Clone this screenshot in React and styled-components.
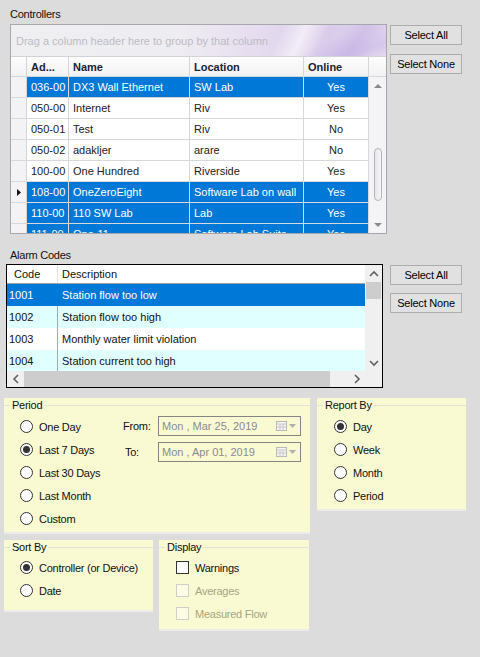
import React from 'react';
import styled, { createGlobalStyle } from 'styled-components';

const GlobalStyle = createGlobalStyle`
    * { box-sizing: border-box; }
    body {
        margin: 0;
        background: #dcdcdc;
        font-family: "Liberation Sans", Arial, sans-serif;
        font-size: 11px;
        color: #000;
    }
`;

const controllers = [
    { ad: '036-00', name: 'DX3 Wall Ethernet', loc: 'SW Lab', online: 'Yes', sel: true },
    { ad: '050-00', name: 'Internet', loc: 'Riv', online: 'Yes' },
    { ad: '050-01', name: 'Test', loc: 'Riv', online: 'No' },
    { ad: '050-02', name: 'adakljer', loc: 'arare', online: 'No' },
    { ad: '100-00', name: 'One Hundred', loc: 'Riverside', online: 'Yes' },
    { ad: '108-00', name: 'OneZeroEight', loc: 'Software Lab on wall', online: 'Yes', sel: true, current: true },
    { ad: '110-00', name: '110 SW Lab', loc: 'Lab', online: 'Yes', sel: true },
    { ad: '111-00', name: 'One-11', loc: 'Software Lab Suite', online: 'Yes', sel: true },
];

const alarms = [
    { code: '1001', desc: 'Station flow too low', sel: true },
    { code: '1002', desc: 'Station flow too high', alt: true },
    { code: '1003', desc: 'Monthly water limit violation' },
    { code: '1004', desc: 'Station current too high', alt: true },
];

const cols = [42, 121, 114, 65];

const Chevron = ({ dir }) => {
    const pts = {
        up: '1,6 5,2 9,6',
        down: '1,2 5,6 9,2',
        left: '6,1 2,5 6,9',
        right: '2,1 6,5 2,9',
    }[dir];
    const vertical = dir === 'up' || dir === 'down';
    return (
        <svg width={vertical ? 10 : 8} height={vertical ? 8 : 10}>
            <polyline points={pts} fill="none" stroke="#606060" strokeWidth="1.6" />
        </svg>
    );
};

const Tri = ({ up }) => (
    <svg width="8" height="5">
        <polygon points={up ? '0,5 4,1 8,5' : '0,0 4,4 8,0'} fill="#8a8a8a" />
    </svg>
);

const App = () => (
    <Page>
        <GlobalStyle />
        <Section>
            <SectionLabel top={7} height={24} left={10}>Controllers</SectionLabel>
            <SectionRow left={10} gap={3}>
                <Grid>
                    <GroupPanel>Drag a column header here to group by that column</GroupPanel>
                    <GridHeader>
                        <IndicatorCell header />
                        <HeaderCell w={cols[0]}>Ad...</HeaderCell>
                        <HeaderCell w={cols[1]}>Name</HeaderCell>
                        <HeaderCell w={cols[2]}>Location</HeaderCell>
                        <HeaderCell w={cols[3]}>Online</HeaderCell>
                        <HeaderCell w={17} last />
                    </GridHeader>
                    <GridBody>
                        <GridRows>
                            {controllers.map((r) => (
                                <GridRow key={r.ad}>
                                    <IndicatorCell>
                                        {r.current && (
                                            <svg width="4" height="7">
                                                <polygon points="0,0 4,3.5 0,7" fill="#111" />
                                            </svg>
                                        )}
                                    </IndicatorCell>
                                    <Cell w={cols[0]} sel={r.sel}>{r.ad}</Cell>
                                    <Cell w={cols[1]} sel={r.sel}>{r.name}</Cell>
                                    <Cell w={cols[2]} sel={r.sel}>{r.loc}</Cell>
                                    <Cell w={cols[3]} sel={r.sel} center>{r.online}</Cell>
                                </GridRow>
                            ))}
                        </GridRows>
                        <GridScroll>
                            <ArrowBox><Tri up /></ArrowBox>
                            <Track>
                                <GridThumb offset={54} />
                            </Track>
                            <ArrowBox down><Tri /></ArrowBox>
                        </GridScroll>
                    </GridBody>
                </Grid>
                <ButtonStack gap={9}>
                    <Button>Select All</Button>
                    <Button>Select None</Button>
                </ButtonStack>
            </SectionRow>
        </Section>

        <Section>
            <SectionLabel top={14} height={30} left={10}>Alarm Codes</SectionLabel>
            <SectionRow left={6} gap={7}>
                <List>
                    <ListMain>
                        <ListContent>
                            <ListHeader>
                                <CodeCell>Code</CodeCell>
                                <DescCell header>Description</DescCell>
                            </ListHeader>
                            {alarms.map((a) => (
                                <ListRow key={a.code} sel={a.sel} alt={a.alt}>
                                    <CodeCell>{a.code}</CodeCell>
                                    <DescCell sel={a.sel}>{a.desc}</DescCell>
                                </ListRow>
                            ))}
                        </ListContent>
                        <ListVScroll>
                            <ArrowBox><Chevron dir="up" /></ArrowBox>
                            <Track>
                                <ListVThumb />
                            </Track>
                            <ArrowBox><Chevron dir="down" /></ArrowBox>
                        </ListVScroll>
                    </ListMain>
                    <ListHScroll>
                        <HArrowBox><Chevron dir="left" /></HArrowBox>
                        <HTrack>
                            <ListHThumb />
                        </HTrack>
                        <HArrowBox><Chevron dir="right" /></HArrowBox>
                        <Corner />
                    </ListHScroll>
                </List>
                <ButtonStack gap={8}>
                    <Button>Select All</Button>
                    <Button>Select None</Button>
                </ButtonStack>
            </SectionRow>
        </Section>

        <OptionsRow top={10} gap={7}>
            <Group w={306} h={136}>
                <GroupHead><GroupTitle>Period</GroupTitle></GroupHead>
                <PeriodBody>
                    <OptionList indent={16} w={119}>
                        <Option><Radio /><span>One Day</span></Option>
                        <Option><Radio checked /><span>Last 7 Days</span></Option>
                        <Option><Radio /><span>Last 30 Days</span></Option>
                        <Option><Radio /><span>Last Month</span></Option>
                        <Option><Radio /><span>Custom</span></Option>
                    </OptionList>
                    <DateGrid>
                        <DateLabel>From:</DateLabel>
                        <DateBox>
                            <DateText>Mon , Mar 25, 2019</DateText>
                            <CalendarIcon />
                        </DateBox>
                        <DateLabel indent={2}>To:</DateLabel>
                        <DateBox>
                            <DateText>Mon , Apr 01, 2019</DateText>
                            <CalendarIcon />
                        </DateBox>
                    </DateGrid>
                </PeriodBody>
            </Group>
            <Group w={149} h={113}>
                <GroupHead><GroupTitle>Report By</GroupTitle></GroupHead>
                <OptionList indent={17}>
                    <Option><Radio checked /><span>Day</span></Option>
                    <Option><Radio /><span>Week</span></Option>
                    <Option><Radio /><span>Month</span></Option>
                    <Option><Radio /><span>Period</span></Option>
                </OptionList>
            </Group>
        </OptionsRow>

        <OptionsRow top={6} gap={6}>
            <Group w={149} h={72}>
                <GroupHead><GroupTitle>Sort By</GroupTitle></GroupHead>
                <OptionList indent={16} tight>
                    <Option><Radio checked /><span>Controller (or Device)</span></Option>
                    <Option><Radio /><span>Date</span></Option>
                </OptionList>
            </Group>
            <Group w={150} h={91}>
                <GroupHead><GroupTitle>Display</GroupTitle></GroupHead>
                <OptionList indent={17} tight>
                    <Option><Check /><span>Warnings</span></Option>
                    <Option disabled><Check disabled /><span>Averages</span></Option>
                    <Option disabled><Check disabled /><span>Measured Flow</span></Option>
                </OptionList>
            </Group>
        </OptionsRow>
    </Page>
);

const CalendarIcon = () => (
    <IconWrap>
        <svg width="11" height="10">
            <rect x="0.5" y="0.5" width="10" height="9" fill="#f4f4f4" stroke="#b8b8b8" />
            <line x1="0.5" y1="3" x2="10.5" y2="3" stroke="#c8c8c8" />
            <line x1="0.5" y1="6" x2="10.5" y2="6" stroke="#c8c8c8" />
            <line x1="4" y1="3" x2="4" y2="9.5" stroke="#c8c8c8" />
            <line x1="7" y1="3" x2="7" y2="9.5" stroke="#c8c8c8" />
        </svg>
        <svg width="7" height="4">
            <polygon points="0,0 7,0 3.5,4" fill="#b0b0b0" />
        </svg>
    </IconWrap>
);

const Page = styled.div`
    width: 480px;
    height: 657px;
    overflow: hidden;
    background: #dcdcdc;
`;

const Section = styled.div`
    display: flex;
    flex-direction: column;
`;

const SectionLabel = styled.div`
    height: ${(p) => p.height}px;
    padding-top: ${(p) => p.top}px;
    padding-left: ${(p) => p.left}px;
    line-height: 14px;
    letter-spacing: -0.25px;
    color: #111;
`;

const SectionRow = styled.div`
    display: flex;
    align-items: flex-start;
    gap: ${(p) => p.gap}px;
    padding-left: ${(p) => p.left}px;
`;

const ButtonStack = styled.div`
    display: flex;
    flex-direction: column;
    gap: ${(p) => p.gap}px;
    padding-top: 1px;
`;

const Button = styled.button`
    width: 72px;
    height: 20px;
    padding: 0;
    background: #e1e1e1;
    border: 1px solid #adadad;
    font-family: inherit;
    font-size: 11px;
    letter-spacing: -0.2px;
    color: #000;
`;

/* controllers grid */
const Grid = styled.div`
    width: 377px;
    height: 210px;
    border: 1px solid #a6a6ad;
    background: #fff;
    display: flex;
    flex-direction: column;
    overflow: hidden;
`;

const GroupPanel = styled.div`
    height: 32px;
    flex-shrink: 0;
    padding-left: 5px;
    display: flex;
    align-items: center;
    color: #bcbcc4;
    border-bottom: 1px solid #d2d2d8;
    background:
        linear-gradient(115deg, transparent 70%, rgba(255, 255, 255, 0.6) 76%, transparent 82%),
        linear-gradient(125deg, transparent 84%, rgba(190, 170, 225, 0.45) 90%, transparent 96%),
        linear-gradient(160deg, transparent 78%, rgba(200, 180, 230, 0.5) 92%, transparent 100%),
        linear-gradient(90deg, #efeff2 0%, #eeedf1 45%, #e6ddef 65%, #d9cbea 85%, #e4dbef 100%);
`;

const GridHeader = styled.div`
    display: flex;
    height: 20px;
    flex-shrink: 0;
    background: linear-gradient(#fdfdfd, #f2f2f4);
    border-bottom: 1px solid #d5d5da;
`;

const HeaderCell = styled.div`
    width: ${(p) => p.w}px;
    flex-shrink: 0;
    padding-left: 4px;
    display: flex;
    align-items: center;
    font-weight: bold;
    color: #1b2335;
    border-right: ${(p) => (p.last ? 'none' : '1px solid #d5d5da')};
`;

const IndicatorCell = styled.div`
    width: 16px;
    flex-shrink: 0;
    display: flex;
    align-items: center;
    justify-content: center;
    background: ${(p) => (p.header ? 'transparent' : '#f3f3f5')};
    border-right: 1px solid #d5d5da;
    border-bottom: ${(p) => (p.header ? 'none' : '1px solid #d8d8dc')};
`;

const GridBody = styled.div`
    display: flex;
    flex: 1;
    min-height: 0;
`;

const GridRows = styled.div`
    flex: 1;
    overflow: hidden;
`;

const GridRow = styled.div`
    display: flex;
    height: 21px;
`;

const Cell = styled.div`
    width: ${(p) => p.w}px;
    flex-shrink: 0;
    padding: 0 4px;
    display: flex;
    align-items: center;
    justify-content: ${(p) => (p.center ? 'center' : 'flex-start')};
    white-space: nowrap;
    overflow: hidden;
    background: ${(p) => (p.sel ? '#0078d7' : '#fff')};
    color: ${(p) => (p.sel ? '#fff' : '#222')};
    border-right: 1px solid #d8d8dc;
    border-bottom: 1px solid #d8d8dc;
`;

const GridScroll = styled.div`
    width: 17px;
    flex-shrink: 0;
    display: flex;
    flex-direction: column;
    background: #f4f4f6;
`;

const ArrowBox = styled.div`
    height: 17px;
    flex-shrink: 0;
    display: flex;
    align-items: ${(p) => (p.down ? 'flex-end' : 'center')};
    padding-bottom: ${(p) => (p.down ? 5 : 0)}px;
    justify-content: center;
`;

const Track = styled.div`
    flex: 1;
    display: flex;
    flex-direction: column;
    align-items: center;
`;

const GridThumb = styled.div`
    margin-top: ${(p) => p.offset}px;
    width: 8px;
    height: 53px;
    border: 1px solid #b4b4bc;
    border-radius: 4px;
    background: linear-gradient(90deg, #e6e6ea, #f6f6f8);
`;

/* alarm list */
const List = styled.div`
    width: 377px;
    height: 124px;
    border: 1px solid #000;
    background: #fff;
    display: flex;
    flex-direction: column;
`;

const ListMain = styled.div`
    display: flex;
    height: 106px;
`;

const ListContent = styled.div`
    flex: 1;
    overflow: hidden;
`;

const ListHeader = styled.div`
    display: flex;
    height: 19px;
    border-bottom: 1px solid #a0a0a0;
    color: #111;
`;

const ListRow = styled.div`
    display: flex;
    height: 22px;
    background: ${(p) => (p.sel ? '#0078d7' : p.alt ? '#e0ffff' : '#fff')};
    color: ${(p) => (p.sel ? '#fff' : '#111')};
`;

const CodeCell = styled.div`
    width: 50px;
    flex-shrink: 0;
    padding-left: 2px;
    display: flex;
    align-items: center;
    ${ListHeader} & {
        padding-left: 7px;
    }
`;

const DescCell = styled.div`
    flex: 1;
    padding-left: 4px;
    display: flex;
    align-items: center;
    white-space: nowrap;
    border-left: 1px solid ${(p) => (p.header ? '#e5e5e5' : p.sel ? '#0078d7' : '#a8a8a8')};
`;

const ListVScroll = styled.div`
    width: 17px;
    flex-shrink: 0;
    display: flex;
    flex-direction: column;
    background: #f0f0f0;
`;

const ListVThumb = styled.div`
    width: 15px;
    height: 17px;
    background: #cdcdcd;
`;

const ListHScroll = styled.div`
    display: flex;
    height: 16px;
    background: #f0f0f0;
`;

const HArrowBox = styled.div`
    width: 17px;
    flex-shrink: 0;
    display: flex;
    align-items: center;
    justify-content: center;
`;

const HTrack = styled.div`
    flex: 1;
    display: flex;
    align-items: center;
`;

const ListHThumb = styled.div`
    width: 306px;
    height: 16px;
    background: #cdcdcd;
`;

const Corner = styled.div`
    width: 17px;
    background: #f0f0f0;
`;

/* option groups */
const OptionsRow = styled.div`
    display: flex;
    align-items: flex-start;
    gap: ${(p) => p.gap}px;
    margin-top: ${(p) => p.top}px;
    padding-left: 4px;
`;

const Group = styled.div`
    width: ${(p) => p.w}px;
    height: ${(p) => p.h}px;
    background: #fafad2;
    border-bottom: 2px solid #ececec;
    display: flex;
    flex-direction: column;
`;

const GroupHead = styled.div`
    height: 14px;
    display: flex;
    align-items: center;
    &::before,
    &::after {
        content: '';
        height: 1px;
        background: #e2e2da;
    }
    &::before {
        width: 6px;
    }
    &::after {
        flex: 1;
    }
`;

const GroupTitle = styled.span`
    padding: 0 2px;
    line-height: 14px;
    letter-spacing: -0.25px;
    color: #111;
`;

const PeriodBody = styled.div`
    display: flex;
    align-items: flex-start;
`;

const OptionList = styled.div`
    display: flex;
    flex-direction: column;
    padding-top: ${(p) => (p.tight ? 2 : 3)}px;
    padding-left: ${(p) => p.indent}px;
    width: ${(p) => (p.w ? `${p.w}px` : 'auto')};
    flex-shrink: 0;
`;

const Option = styled.div`
    height: 23px;
    display: flex;
    align-items: center;
    gap: 6px;
    letter-spacing: -0.25px;
    color: ${(p) => (p.disabled ? '#a5a582' : '#111')};
    white-space: nowrap;
`;

const Radio = styled.span`
    width: 13px;
    height: 13px;
    flex-shrink: 0;
    border-radius: 50%;
    border: 1px solid #333;
    background: #fff;
    display: flex;
    align-items: center;
    justify-content: center;
    &::after {
        content: '';
        width: 7px;
        height: 7px;
        border-radius: 50%;
        background: ${(p) => (p.checked ? '#333' : 'transparent')};
    }
`;

const Check = styled.span`
    width: 13px;
    height: 13px;
    flex-shrink: 0;
    border: 1px solid ${(p) => (p.disabled ? '#cfcfc6' : '#333')};
    background: ${(p) => (p.disabled ? '#fbfbe6' : '#fff')};
`;

const DateGrid = styled.div`
    display: grid;
    grid-template-columns: 35px 143px;
    grid-auto-rows: 20px;
    row-gap: 6px;
    margin-top: 4px;
`;

const DateLabel = styled.div`
    display: flex;
    align-items: center;
    padding-left: ${(p) => p.indent || 0}px;
    letter-spacing: -0.25px;
    color: #111;
`;

const DateBox = styled.div`
    display: flex;
    align-items: center;
    border: 1px solid #858585;
    background: #fafad2;
    padding: 0 4px 0 3px;
`;

const DateText = styled.span`
    flex: 1;
    color: #8a8a96;
    white-space: nowrap;
`;

const IconWrap = styled.span`
    display: flex;
    align-items: center;
    gap: 2px;
`;

export default App;
